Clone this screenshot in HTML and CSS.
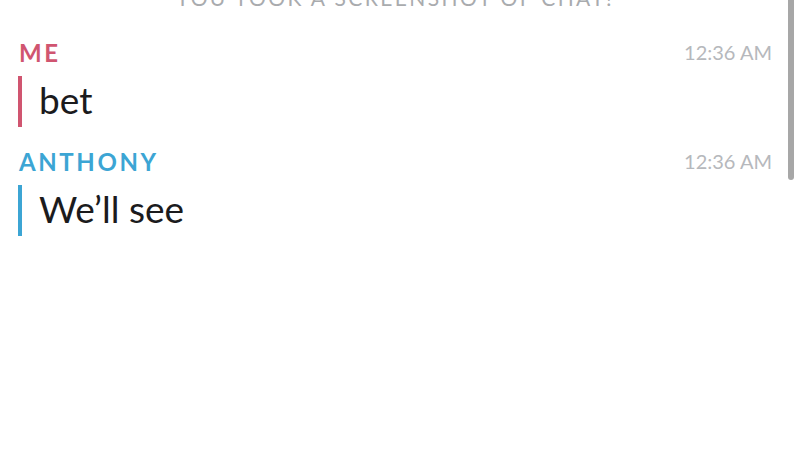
FILE: index.html
```html
<!DOCTYPE html>
<html lang="en">
<head>
    <meta charset="UTF-8">
    <meta name="viewport" content="width=device-width, initial-scale=1.0">
    <title>Chat</title>
    <link rel="stylesheet" href="styles.css">
</head>
<body>
    <div class="chat">
        <div class="notice">You took a screenshot of Chat!</div>

        <!-- pesan dari saya -->
        <div class="message me">
            <div class="message-head">
                <span class="sender">Me</span>
                <span class="time">12:36 AM</span>
            </div>
            <div class="message-body">bet</div>
        </div>

        <!-- pesan dari Anthony -->
        <div class="message friend">
            <div class="message-head">
                <span class="sender">Anthony</span>
                <span class="time">12:36 AM</span>
            </div>
            <div class="message-body">We’ll see</div>
        </div>
    </div>

    <div class="scrollbar"></div>
</body>
</html>
```

FILE: styles.css
```css
/* Reset */
* {
    margin: 0;
    padding: 0;
    box-sizing: border-box;
}

body {
    font-family: Lato, "Noto Sans", sans-serif;
    background: #fff;
    color: #1b1b1d;
    width: 800px;
    height: 450px;
    overflow: hidden;
    position: relative;
}

.chat {
    padding: 0 28px 0 18px;
}

.notice {
    margin-top: -12px;
    text-align: center;
    text-transform: uppercase;
    font-size: 21px;
    letter-spacing: 2.4px;
    color: #a9abae;
    height: 51px;
    line-height: 20px;
}

.message {
    margin-bottom: 21px;
}

.message-head {
    display: flex;
    justify-content: space-between;
    align-items: center;
    height: 26px;
    padding-left: 1px;
}

.sender {
    font-size: 24px;
    font-weight: 700;
    text-transform: uppercase;
    letter-spacing: 2.6px;
}

.time {
    font-size: 20px;
    color: #b6b8bc;
}

.message-body {
    margin-top: 11px;
    border-left: 4px solid;
    padding: 2px 0 5px 17px;
    font-size: 37px;
    line-height: 44px;
    height: 51px;
    color: #1b1b1d;
}

.me .sender {
    color: #d05570;
}

.friend .sender {
    color: #3ca5d4;
}

.me .message-body {
    border-color: #d05570;
}

.friend .message-body {
    border-color: #3ca5d4;
}

.scrollbar {
    position: absolute;
    top: 0;
    right: 6px;
    width: 6px;
    height: 180px;
    border-radius: 0 0 3px 3px;
    background: #a7a7a7;
}
```
